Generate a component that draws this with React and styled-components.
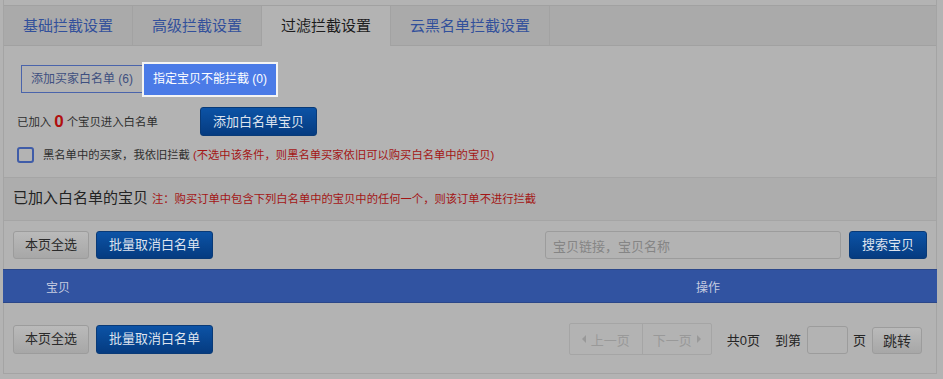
import React from "react";
import styled, { createGlobalStyle } from "styled-components";

const Global = createGlobalStyle`
  html, body { margin: 0; padding: 0; background: #b3b3b3; }
  body { font-family: "Liberation Sans", "Noto Sans CJK SC", sans-serif; font-size: 12px; color: #2b2b2b; }
  * { box-sizing: border-box; }
`;

const Page = styled.div`
  margin-left: 3px;
  width: 934px;
  height: 374px;
  padding-top: 5px;
  border-left: 1px solid #a4a4a4;
  border-right: 1px solid #a4a4a4;
  border-bottom: 1px solid #a4a4a4;
`;

const TabBar = styled.div`
  display: flex;
  height: 41px;
  background: #aaaaaa;
  border-top: 1px solid #a1a1a1;
  border-bottom: 1px solid #a1a1a1;
`;

const Tab = styled.div`
  display: flex;
  align-items: center;
  padding: 0 19px;
  font-size: 15px;
  line-height: 20px;
  border-right: 1px solid #a2a2a2;
  color: ${p => (p.$active ? "#1c1c1c" : "#32509b")};
  background: ${p => (p.$active ? "#b3b3b3" : "transparent")};
  margin-bottom: ${p => (p.$active ? "-1px" : "0")};
  padding-bottom: ${p => (p.$active ? "1px" : "0")};
`;

const SubTabs = styled.div`
  display: flex;
  align-items: center;
  margin: 19px 0 0 17px;
  height: 28px;
`;

const SubTab = styled.div`
  display: flex;
  align-items: center;
  justify-content: center;
  font-size: 12px;
  line-height: 16px;
  white-space: nowrap;
  ${p =>
    p.$active
      ? `
    height: 31px;
    width: 132px;
    margin-left: 1px;
    background: #4b7be7;
    color: #ffffff;
    outline: 2px solid #f4f4f4;
  `
      : `
    height: 28px;
    width: 122px;
    border: 1px solid #4a64ab;
    color: #3e4f7f;
  `}
`;

const InfoRow = styled.div`
  display: flex;
  align-items: center;
  margin: 14px 0 0 13px;
  height: 29px;
`;

const InfoText = styled.span`
  width: 183px;
  font-size: 11.4px;
  color: #2e2e2e;
  line-height: 16px;
`;

const Count = styled.b`
  color: #b00f0f;
  font-size: 17px;
  margin: 0 3px;
  position: relative;
  top: 1px;
`;

const PrimaryButton = styled.button`
  height: ${p => p.$h || 29}px;
  padding: 0 ${p => p.$pad || 12}px;
  font-family: inherit;
  font-size: 13px;
  line-height: 16px;
  color: #dde3ee;
  border: 1px solid #093a77;
  border-radius: 3px;
  background: linear-gradient(#0c53a6, #053b80);
  white-space: nowrap;
`;

const GrayButton = styled.button`
  height: ${p => p.$h || 28}px;
  padding: 0 ${p => p.$pad || 11}px;
  font-family: inherit;
  font-size: 13px;
  line-height: 16px;
  color: #2a2a2a;
  border: 1px solid #9c9c9c;
  border-radius: 3px;
  background: linear-gradient(#bababa, #a7a7a7);
  white-space: nowrap;
`;

const CheckRow = styled.label`
  display: flex;
  align-items: center;
  margin: 11px 0 0 13px;
  font-size: 11.3px;
  line-height: 16px;
  color: #2e2e2e;
`;

const CheckBox = styled.span`
  width: 17px;
  height: 16px;
  border: 2px solid #3f5ca8;
  border-radius: 3px;
  margin-right: 9px;
`;

const Red = styled.span`
  color: #a31515;
  font-size: ${p => (p.$size ? `${p.$size}px` : "inherit")};
`;

const SectionHeader = styled.div`
  display: flex;
  align-items: center;
  margin-top: 14px;
  height: 44px;
  padding: 0 0 2px 9px;
  background: #adadad;
  border-top: 1px solid #a5a5a5;
  border-bottom: 1px solid #a5a5a5;
`;

const SectionTitle = styled.span`
  font-size: 15px;
  color: #232323;
  margin-right: 4px;
  line-height: 20px;
`;

const Toolbar = styled.div`
  display: flex;
  align-items: center;
  gap: 7px;
  padding: 0 9px;
  margin-top: ${p => p.$mt || 10}px;
  height: ${p => p.$h || 28}px;
`;

const Spacer = styled.div`
  flex: 1;
`;

const SearchInput = styled.div`
  width: 296px;
  height: 28px;
  margin-right: 1px;
  border: 1px solid #9c9c9c;
  border-radius: 3px;
  display: flex;
  align-items: center;
  padding-left: 7px;
  font-size: 13px;
  color: #858585;
`;

const TableHead = styled.div`
  display: flex;
  align-items: center;
  margin: 10px -1px 0 -1px;
  height: 34px;
  background: #3153a1;
  border-top: 1px solid #2b4789;
  border-bottom: 1px solid #2b4789;
  color: #c6cce0;
  font-size: 12px;
`;

const HeadCell = styled.div`
  width: ${p => p.$w || "auto"};
  padding-left: ${p => p.$pl || 0}px;
`;

const Pagination = styled.div`
  display: flex;
  align-items: center;
  height: 32px;
  margin-right: 5px;
`;

const Pager = styled.div`
  display: flex;
  height: 32px;
  border: 1px solid #a5a5a5;
  border-radius: 2px;
  margin-right: 15px;
`;

const PageLink = styled.div`
  display: flex;
  align-items: center;
  justify-content: center;
  gap: 5px;
  width: ${p => p.$w}px;
  color: #999999;
  font-size: 13px;
  & + & { border-left: 1px solid #a5a5a5; }
`;

const Tri = styled.span`
  width: 0;
  height: 0;
  border-top: 4px solid transparent;
  border-bottom: 4px solid transparent;
  ${p => (p.$dir === "left" ? "border-right: 4px solid #999999;" : "border-left: 4px solid #999999;")}
`;

const PagerText = styled.span`
  font-size: 13px;
  color: #252525;
  margin-right: ${p => p.$mr || 0}px;
`;

const PageInput = styled.div`
  width: 41px;
  height: 28px;
  border: 1px solid #9c9c9c;
  border-radius: 3px;
  margin: 2px 5px 0 6px;
`;

const JumpButton = styled(GrayButton)`
  margin: 3px 0 0 6px;
  width: 50px;
  padding: 0;
  font-size: 14px;
`;

export default function App() {
  return (
    <>
      <Global />
      <Page>
        <TabBar>
          <Tab>基础拦截设置</Tab>
          <Tab>高级拦截设置</Tab>
          <Tab $active>过滤拦截设置</Tab>
          <Tab>云黑名单拦截设置</Tab>
        </TabBar>

        <SubTabs>
          <SubTab>添加买家白名单 (6)</SubTab>
          <SubTab $active>指定宝贝不能拦截 (0)</SubTab>
        </SubTabs>

        <InfoRow>
          <InfoText>
            已加入<Count>0</Count>个宝贝进入白名单
          </InfoText>
          <PrimaryButton $pad={12}>添加白名单宝贝</PrimaryButton>
        </InfoRow>

        <CheckRow>
          <CheckBox />
          黑名单中的买家，我依旧拦截&nbsp;<Red>(不选中该条件，则黑名单买家依旧可以购买白名单中的宝贝)</Red>
        </CheckRow>

        <SectionHeader>
          <SectionTitle>已加入白名单的宝贝</SectionTitle>
          <Red $size={11.3}>注：购买订单中包含下列白名单中的宝贝中的任何一个，则该订单不进行拦截</Red>
        </SectionHeader>

        <Toolbar>
          <GrayButton>本页全选</GrayButton>
          <PrimaryButton $h={28} $pad={12}>批量取消白名单</PrimaryButton>
          <Spacer />
          <SearchInput>宝贝链接，宝贝名称</SearchInput>
          <PrimaryButton $h={28} $pad={12}>搜索宝贝</PrimaryButton>
        </Toolbar>

        <TableHead>
          <HeadCell $w="693px" $pl={43}>宝贝</HeadCell>
          <HeadCell>操作</HeadCell>
        </TableHead>

        <Toolbar $mt={20} $h={32}>
          <GrayButton $h={29}>本页全选</GrayButton>
          <PrimaryButton $h={29} $pad={12}>批量取消白名单</PrimaryButton>
          <Spacer />
          <Pagination>
            <Pager>
              <PageLink $w={72}><Tri $dir="left" />上一页</PageLink>
              <PageLink $w={69}>下一页<Tri $dir="right" /></PageLink>
            </Pager>
            <PagerText $mr={15}>共0页</PagerText>
            <PagerText>到第</PagerText>
            <PageInput />
            <PagerText>页</PagerText>
            <JumpButton $h={27}>跳转</JumpButton>
          </Pagination>
        </Toolbar>
      </Page>
    </>
  );
}
